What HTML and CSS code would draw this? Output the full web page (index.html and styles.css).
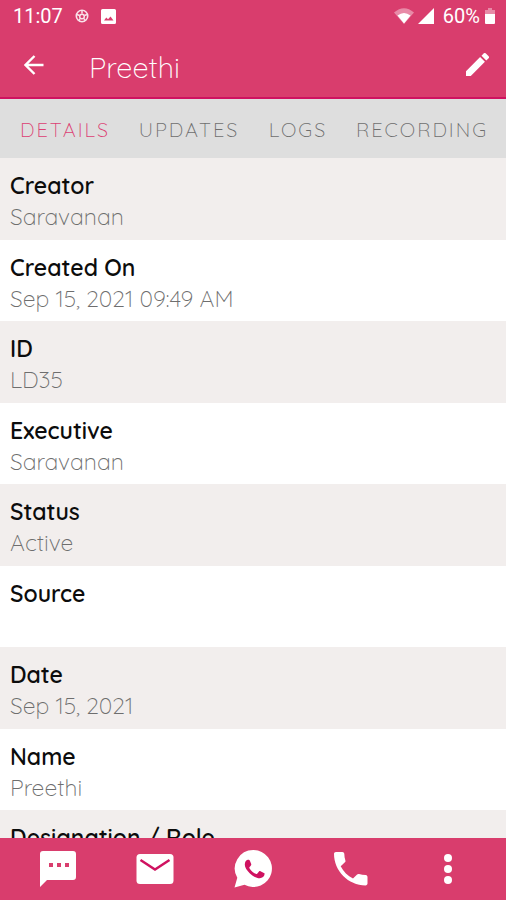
FILE: index.html
```html
<!DOCTYPE html>
<html lang="en">
<head>
<meta charset="utf-8">
<meta name="viewport" content="width=device-width, initial-scale=1">
<title>Preethi</title>
<link rel="stylesheet" href="styles.css">
</head>
<body>
<div class="status">
  <span class="clock">11:07</span>
  <svg class="status-ball" viewBox="0 0 14 14" aria-hidden="true"><circle cx="7" cy="7" r="5.7" fill="none" stroke="currentColor" stroke-width="1.6"/><path d="M7 1.500v3M2 5.500l2.500 1M12 5.500l-2.500 1M4 11.500l1-2M10 11.500l-1-2" fill="none" stroke="currentColor" stroke-width="1.500"/><circle cx="7" cy="7.500" r="2.300" fill="none" stroke="currentColor" stroke-width="1.500"/></svg>
  <svg class="status-photo" viewBox="0 0 15 15" aria-hidden="true"><path fill="currentColor" fill-rule="evenodd" d="M1.500 0h12A1.500 1.500 0 0 1 15 1.500v12a1.500 1.500 0 0 1-1.500 1.500h-12A1.500 1.500 0 0 1 0 13.500v-12A1.500 1.500 0 0 1 1.500 0zM3 11.500h9.500L9.500 7.500 7 10.300 5.300 8.500z"/></svg>
  <div class="signals">
    <svg class="wifi" viewBox="0 0 20 16" aria-hidden="true"><path fill="currentColor" opacity=".4" d="M0 4.500Q10-4 20 4.500L10 16z"/><path fill="currentColor" d="M3.500 7.500Q10 2.500 16.500 7.500L10 15.500z"/></svg>
    <svg class="cell" viewBox="0 0 16 16" aria-hidden="true"><path fill="currentColor" d="M16 0v16H0z"/></svg>
    <span class="percent">60%</span>
    <svg class="battery" viewBox="0 0 10 16" aria-hidden="true"><path fill="currentColor" opacity=".4" d="M3 0h4v2h3v4H0V2h3z"/><path fill="currentColor" d="M0 6h10v9a1 1 0 0 1-1 1H1a1 1 0 0 1-1-1z"/></svg>
  </div>
</div>
<header class="bar">
  <button class="icon-button" aria-label="Back"><svg class="back" viewBox="0 0 20 20"><path d="M19.500 10H2M10.500 1L1.500 10l9 9" fill="none" stroke="currentColor" stroke-width="2.400"/></svg></button>
  <h1 class="title">Preethi</h1>
  <button class="icon-button" aria-label="Edit"><svg class="edit" viewBox="3 3 18 18"><path fill="currentColor" d="M3 17.250V21h3.750L17.810 9.940l-3.750-3.750L3 17.250zM20.710 7.040a1 1 0 0 0 0-1.410l-2.340-2.340a1 1 0 0 0-1.410 0l-1.830 1.830 3.750 3.750 1.830-1.830z"/></svg></button>
</header>
<nav class="tabs" aria-label="Sections">
  <a class="tab tab-active" href="#details" aria-current="page">DETAILS</a>
  <a class="tab" href="#updates">UPDATES</a>
  <a class="tab" href="#logs">LOGS</a>
  <a class="tab" href="#recording">RECORDING</a>
</nav>
<main class="content" id="details">
  <dl class="list">
    <div class="row"><dt>Creator</dt><dd>Saravanan</dd></div>
    <div class="row"><dt>Created On</dt><dd>Sep 15, 2021 09:49 AM</dd></div>
    <div class="row"><dt>ID</dt><dd>LD35</dd></div>
    <div class="row"><dt>Executive</dt><dd>Saravanan</dd></div>
    <div class="row"><dt>Status</dt><dd>Active</dd></div>
    <div class="row"><dt>Source</dt><dd></dd></div>
    <div class="row"><dt>Date</dt><dd>Sep 15, 2021</dd></div>
    <div class="row"><dt>Name</dt><dd>Preethi</dd></div>
    <div class="row"><dt>Designation / Role</dt><dd></dd></div>
  </dl>
</main>
<footer class="actions">
  <button class="action" aria-label="Message"><svg viewBox="0 0 40 40"><path fill="currentColor" fill-rule="evenodd" d="M5 2h30a3 3 0 0 1 3 3v23a3 3 0 0 1-3 3H9l-7 7V5a3 3 0 0 1 3-3zm6 12v4h4v-4zm8 0v4h4v-4zm8 0v4h4v-4z"/></svg></button>
  <button class="action" aria-label="Email"><svg viewBox="0 0 40 40"><rect x="1.500" y="5" width="37" height="30" rx="3.500" fill="currentColor"/><path class="cut" d="M5.500 11L20 20.500 34.500 11"/></svg></button>
  <button class="action" aria-label="WhatsApp"><svg viewBox="0 0 40 40"><path fill="currentColor" d="M20.500 1a18.500 18.500 0 1 1-9 34.700L1.500 38.500l2.800-9.700A18.500 18.500 0 0 1 20.500 1z"/><path class="handset" d="M13.300 11.500c.6-.7 1.300-.8 2-.7.800 0 1.200.1 1.600 1l1.300 3.300c.3.800-.2 1.500-1.600 3-.3.400-.4.700 0 1.300 1.600 2.600 3.600 4.200 6.400 5.500.6.300 1 .2 1.400-.3l1.600-2c.5-.6 1-.6 1.500-.3l3.400 1.600c.6.300.8.500.7 1.200-.2 2.700-2.400 4-4.800 4.100-2.800.1-7.200-2-10.100-5-2.800-2.900-4.900-5.700-4.900-8.500 0-1.800.5-3.200 1.500-4.200z"/></svg></button>
  <button class="action" aria-label="Call"><svg viewBox="0 0 40 40"><path fill="currentColor" d="M9.700 17.300c2.700 5.300 7 9.600 12.300 12.300l4.100-4.100c.5-.5 1.300-.7 1.900-.5 2.100.7 4.300 1.100 6.600 1.100 1 0 1.900.8 1.900 1.900v6.500c0 1-.9 1.900-1.900 1.900C17.200 36.400 3 22.100 3 4.800c0-1 .8-1.900 1.900-1.900h6.500c1 0 1.900.8 1.900 1.900 0 2.300.4 4.500 1.100 6.600.2.600.1 1.400-.5 1.900z"/></svg></button>
  <button class="action" aria-label="More"><svg viewBox="0 0 40 40"><g fill="currentColor"><circle cx="20" cy="9" r="4"/><circle cx="20" cy="20" r="4"/><circle cx="20" cy="31" r="4"/></g></svg></button>
</footer>
</body>
</html>
```
FILE: styles.css
```css
:root {
  --pink: #d93d6d;
  --pink-dark: #cf1260;
}

* {
  box-sizing: border-box;
}

body {
  margin: 0;
  height: 100vh;
  display: flex;
  flex-direction: column;
  background: #fff;
  font-family: Quicksand, Lato, sans-serif;
  font-size: 23px;
}

button {
  display: flex;
  align-items: center;
  justify-content: center;
  padding: 0;
  border: 0;
  background: none;
  color: #fff;
}

.status {
  flex: none;
  display: flex;
  align-items: center;
  height: 32px;
  padding: 0 11px 0 13px;
  background: var(--pink);
  color: #fff;
  font: 20px/32px Roboto, sans-serif;
}

.status-ball {
  width: 14px;
  height: 14px;
  margin-left: 12px;
  opacity: .85;
}

.status-photo {
  width: 15px;
  height: 15px;
  margin-left: 12px;
}

.signals {
  display: flex;
  align-items: center;
  margin-left: auto;
}

.wifi {
  width: 20px;
  height: 16px;
}

.cell {
  width: 16px;
  height: 16px;
  margin: 0 9px 0 4px;
}

.battery {
  width: 10px;
  height: 16px;
  margin-left: 5px;
}

.bar {
  flex: none;
  display: flex;
  align-items: center;
  height: 67px;
  padding: 0 14px;
  border-bottom: 2px solid var(--pink-dark);
  background: var(--pink);
  color: #fff;
}

.icon-button {
  width: 40px;
  height: 40px;
}

.icon-button:last-child {
  width: 30px;
}

.back {
  width: 20px;
  height: 20px;
}

.edit {
  width: 23px;
  height: 23px;
}

.title {
  flex: 1;
  margin: 0 0 0 35px;
  padding-top: 4px;
  font-size: 29px;
  line-height: 36px;
  font-weight: 300;
}

.tabs {
  flex: none;
  display: grid;
  grid-template-columns: 118fr 130fr 88fr 160fr;
  height: 59px;
  padding: 0 4px 0 6px;
  background: #dedede;
}

.tab {
  border-bottom: 3px solid transparent;
  color: #6e6e6e;
  font-size: 20px;
  line-height: 62px;
  letter-spacing: 2px;
  text-align: center;
  text-decoration: none;
  white-space: nowrap;
  font-weight: 300;
}

.tab-active {
  border-color: #dc1c66;
  color: #dc3f73;
}

.content {
  flex: 1;
  min-height: 0;
  overflow: hidden;
}

.list {
  margin: 0;
}

.row {
  min-height: 81px;
  padding: 12px 10px 7px;
  line-height: 31px;
}

.row:nth-child(odd) {
  border-bottom: 1px solid #f2eeed;
  background: #f2eeed;
}

dt {
  color: #0c0c0c;
  font-weight: 600;
}

dd {
  margin: 0;
  color: #6e6e6e;
  font-weight: 300;
}

.actions {
  flex: none;
  display: grid;
  grid-template-columns: repeat(5, 1fr);
  height: 62px;
  padding: 0 9px;
  background: var(--pink);
}

.action svg {
  width: 40px;
  height: 40px;
}

.cut {
  fill: none;
  stroke: var(--pink-dark);
  stroke-width: 2.5;
}

.handset {
  fill: var(--pink-dark);
}
```
